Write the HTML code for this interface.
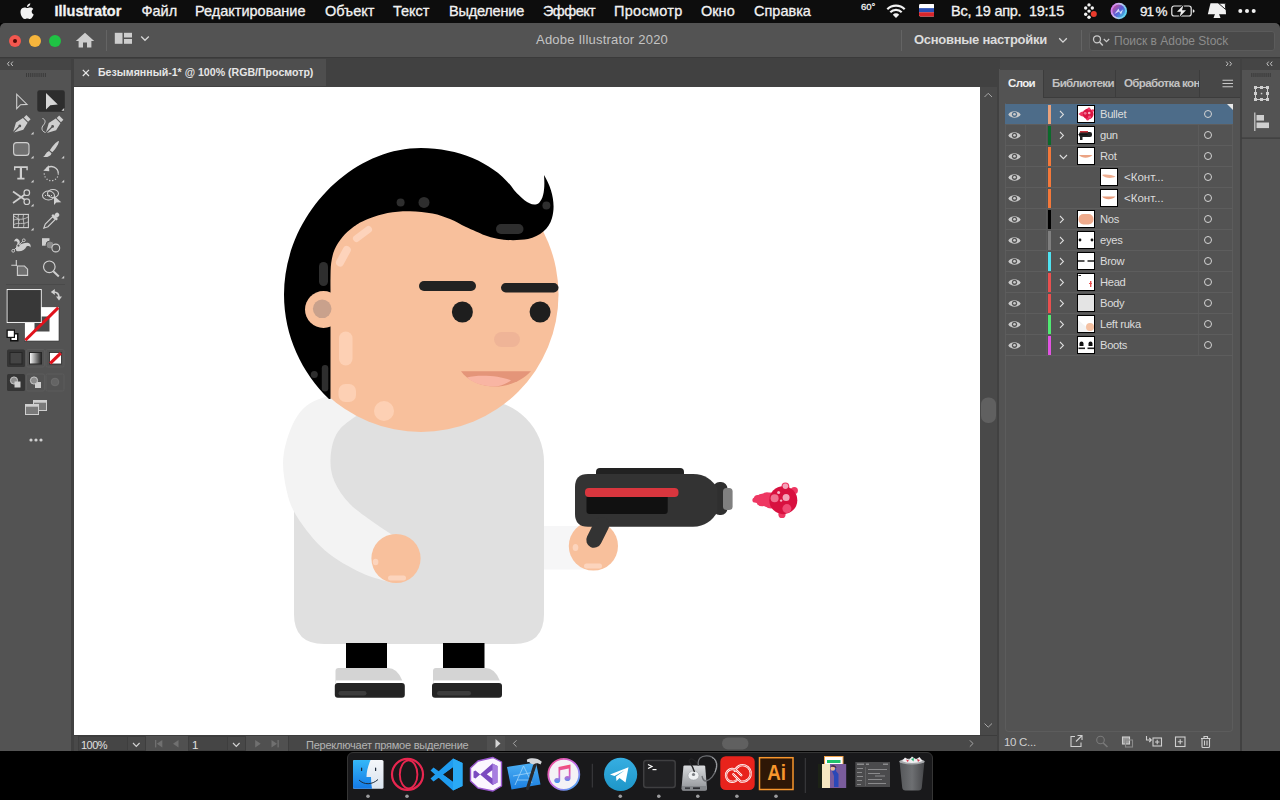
<!DOCTYPE html>
<html lang="ru"><head><meta charset="utf-8"><title>Adobe Illustrator 2020</title>
<style>
*{box-sizing:border-box;margin:0;padding:0}
html,body{width:1280px;height:800px;overflow:hidden;background:#000;font-family:"Liberation Sans",sans-serif;color:#ddd}
.a{position:absolute}
#menubar{left:0;top:0;width:1280px;height:23px;background:#0d0d0d}
#menubar span{-webkit-text-stroke:0.3px #f2f2f2;position:absolute;top:3px;font-size:14.5px;color:#f2f2f2;white-space:nowrap;line-height:17px}
#appbar{left:0;top:23px;width:1280px;height:35px;background:#535353;border-radius:5px 5px 0 0}
#win{left:0;top:58px;width:1280px;height:693px;background:#414141}
#tools{left:0;top:69px;width:71px;height:682px;background:#535353}
#canvas{left:74px;top:87px;width:906px;height:648px;background:#fff}
#tab{left:74px;top:58.5px;width:252px;height:27.5px;background:#4e4e4e;font-size:10.6px;font-weight:bold;line-height:27px;color:#e6e6e6;white-space:nowrap}
#vscroll{left:980px;top:87px;width:16.5px;height:648px;background:#494949}
#status{left:74px;top:735px;width:923px;height:16px;background:#494949}
#rpanel{left:998.5px;top:69px;width:241px;height:682px;background:#535353}
#rdock{left:1241.5px;top:69px;width:38.5px;height:682px;background:#535353}

.lr{left:0;width:228px;height:21px;border-bottom:1px solid #5d5d5d}
.ln{top:3px;font-size:11.2px;letter-spacing:-0.3px;line-height:15px;color:#dcdcdc;white-space:nowrap}
.pt{top:76px;font-size:11.5px;letter-spacing:-0.62px;font-weight:bold;line-height:15px;color:#c2c2c2;white-space:nowrap}
.st{top:2.5px;font-size:11.5px;line-height:14px;white-space:nowrap}
</style></head><body>
<div id="menubar" class="a">
<svg class="a" style="left:20px;top:3px" width="15" height="17" viewBox="0 0 15 17"><path d="M10.3 0.2 C10.4 1.2 10 2.1 9.4 2.8 C8.8 3.5 7.9 4 7 3.9 C6.9 3 7.3 2.1 7.9 1.5 C8.5 0.8 9.5 0.3 10.3 0.2 Z M13.3 5.9 C12.3 6.5 11.7 7.4 11.7 8.6 C11.7 10 12.5 11 13.7 11.5 C13.4 12.4 13 13.2 12.4 14 C11.7 15 11 16 9.9 16 C8.8 16 8.5 15.4 7.3 15.4 C6.1 15.4 5.7 16 4.7 16 C3.6 16 2.8 15 2.1 14 C0.7 12 -0.2 8.6 1.2 6.3 C1.9 5.1 3.2 4.4 4.5 4.4 C5.6 4.4 6.6 5.1 7.3 5.1 C7.9 5.1 9.2 4.3 10.5 4.4 C11 4.4 12.5 4.6 13.3 5.9 Z" fill="#f2f2f2"/></svg>
<span id="m0" style="left:54.5px;font-weight:bold">Illustrator</span>
<span id="m1" style="left:141.5px">Файл</span>
<span id="m2" style="left:195px">Редактирование</span>
<span id="m3" style="left:325px">Объект</span>
<span id="m4" style="left:393px">Текст</span>
<span id="m5" style="left:449px;letter-spacing:-0.2px">Выделение</span>
<span id="m6" style="left:543px;letter-spacing:-0.55px">Эффект</span>
<span id="m7" style="left:614px;letter-spacing:0.3px">Просмотр</span>
<span id="m8" style="left:701px">Окно</span>
<span id="m9" style="left:754px">Справка</span>
<span id="m10" style="left:861px;top:0;font-size:9.5px;line-height:14px">60°</span>
<span id="m11" style="left:951px;letter-spacing:-0.25px">Вс, 19 апр.&nbsp; 19:15</span>
<span id="m12" style="left:1140px;font-size:13.5px;letter-spacing:-1.1px">91 %</span>
<!-- wifi -->
<svg class="a" style="left:886px;top:3px" width="20" height="16" viewBox="0 0 20 16"><g fill="none" stroke="#f2f2f2" stroke-width="2.2" stroke-linecap="butt"><path d="M1.3 6.2 A12.3 12.3 0 0 1 18.7 6.2"/><path d="M4.3 9.3 A8 8 0 0 1 15.7 9.3"/></g><path d="M10 15 L6.8 11.7 A4.5 4.5 0 0 1 13.2 11.7 Z" fill="#f2f2f2"/></svg>
<!-- flag -->
<svg class="a" style="left:918.5px;top:4.3px" width="15.7" height="12.5" viewBox="0 0 17 13" preserveAspectRatio="none"><rect width="17" height="13" rx="1.5" fill="#fff"/><rect y="4.3" width="17" height="4.4" fill="#2a4fb5"/><path d="M0 8.7 H17 V11.5 Q17 13 15.5 13 H1.5 Q0 13 0 11.5 Z" fill="#d8262c"/></svg>
<!-- dots icon -->
<svg class="a" style="left:1082px;top:2px" width="18" height="19" viewBox="1082 2 18 19"><g fill="#f2f2f2"><circle cx="1089" cy="4.9" r="1.7"/><circle cx="1085.7" cy="8" r="1.7"/><circle cx="1092.3" cy="8" r="1.7"/><circle cx="1089" cy="11.1" r="1.7"/><circle cx="1085.7" cy="14.2" r="1.7"/><circle cx="1089" cy="17.3" r="1.7"/></g><circle cx="1093.8" cy="14" r="3" fill="#ea3b2c"/></svg>
<!-- siri -->
<svg class="a" style="left:1110px;top:2px" width="18" height="18" viewBox="0 0 18 18"><defs><linearGradient id="sg" x1="0" y1="0.3" x2="1" y2="0.7"><stop offset="0" stop-color="#d66af0"/><stop offset="0.450" stop-color="#c8c8f0"/><stop offset="1" stop-color="#45d2f0"/></linearGradient><linearGradient id="sg2" x1="0" y1="0" x2="1" y2="1"><stop offset="0" stop-color="#e0508a"/><stop offset="0.5" stop-color="#5a5ad8"/><stop offset="1" stop-color="#3ad0e0"/></linearGradient></defs><circle cx="8.8" cy="9" r="8.3" fill="url(#sg)"/><circle cx="8.8" cy="9" r="6.4" fill="url(#sg2)"/><path d="M4.5 12 L8.5 6.5 L10 10 L13 7.5 L11 12.5 L9 9.5 Z" fill="#eef" opacity="0.850"/></svg>
<!-- battery -->
<svg class="a" style="left:1170px;top:4px" width="27" height="14" viewBox="1170 4 27 14"><rect x="1171.8" y="6" width="19.4" height="10" rx="2.2" fill="none" stroke="#ececec" stroke-width="1.2"/><path d="M1192.8 9.2 Q1194.6 9.6 1194.6 11 Q1194.6 12.4 1192.8 12.8 Z" fill="#ececec"/><path d="M1183.5 5 L1177 11.8 H1181 L1179.5 17 L1186 10.2 H1182 Z" fill="#ececec" stroke="#0d0d0d" stroke-width="1.6" paint-order="stroke"/></svg>
<!-- display -->
<svg class="a" style="left:1206px;top:2px" width="22" height="18" viewBox="1206 2 22 18"><path d="M1210.5 3.3 H1225.3 L1226 14.3 H1207.8 Z" fill="#f2f2f2"/><path d="M1213.5 18 H1220.5 L1219 14 H1215 Z" fill="#f2f2f2"/><path d="M1218.5 3.3 H1225.3 L1225.7 9.5 Z" fill="#f2f2f2" stroke="#0d0d0d" stroke-width="0.9"/></svg>
<svg class="a" style="left:1237px;top:8px" width="20" height="6" viewBox="0 0 20 6"><circle cx="3.3" cy="3" r="2" fill="#f2f2f2"/><circle cx="10" cy="3" r="2" fill="#f2f2f2"/><circle cx="16.7" cy="3" r="2" fill="#f2f2f2"/></svg>
</div>
<div id="appbar" class="a">
<div class="a" style="left:8.8px;top:11.8px;width:12px;height:12px;border-radius:6px;background:#f3574f"></div>
<div class="a" style="left:12.8px;top:15.8px;width:4px;height:4px;border-radius:2px;background:#4d0a06"></div>
<div class="a" style="left:29px;top:11.8px;width:12px;height:12px;border-radius:6px;background:#f6b53c"></div>
<div class="a" style="left:48.8px;top:11.8px;width:12px;height:12px;border-radius:6px;background:#1fc244"></div>
<svg class="a" style="left:75px;top:9px" width="20" height="16" viewBox="0 0 20 16"><path d="M10 0.7 L0.8 9 H3.6 V15.4 H8 V10.6 H12 V15.4 H16.4 V9 H19.2 Z" fill="#cdcdcd"/></svg>
<div class="a" style="left:105.5px;top:7px;width:1px;height:21px;background:#646464"></div>
<svg class="a" style="left:114px;top:9px" width="20" height="13" viewBox="0 0 20 13"><rect x="0.8" y="0.8" width="7.7" height="11" fill="#cdcdcd"/><rect x="10" y="0.8" width="8" height="4.7" fill="#cdcdcd"/><rect x="10" y="7" width="8" height="4.8" fill="#cdcdcd"/></svg>
<svg class="a" style="left:140px;top:12px" width="10" height="7" viewBox="0 0 10 7"><path d="M1.2 1.5 L5 5.3 L8.8 1.5" fill="none" stroke="#d6d6d6" stroke-width="1.3"/></svg>
<span id="t0" class="a" style="left:536px;top:9px;font-size:13px;line-height:16px;color:#c4c4c4;white-space:nowrap;letter-spacing:0.22px">Adobe Illustrator 2020</span>
<div class="a" style="left:901px;top:7px;width:1px;height:21px;background:#646464"></div>
<span id="t1" class="a" style="left:914px;top:8px;font-size:13px;font-weight:bold;line-height:17px;color:#dcdcdc;white-space:nowrap;letter-spacing:-0.28px">Основные настройки</span>
<svg class="a" style="left:1058px;top:14px" width="10" height="7" viewBox="0 0 10 7"><path d="M1.2 1.3 L5 5.1 L8.8 1.3" fill="none" stroke="#d6d6d6" stroke-width="1.3"/></svg>
<div class="a" style="left:1081px;top:7px;width:1px;height:21px;background:#646464"></div>
<div class="a" style="left:1088.5px;top:8px;width:186px;height:19.5px;border-radius:3px;background:#494949;border:1px solid #5b5b5b"></div>
<svg class="a" style="left:1092px;top:11px" width="20" height="14" viewBox="0 0 20 14"><circle cx="5" cy="5.3" r="3.5" fill="none" stroke="#c9c9c9" stroke-width="1.3"/><path d="M7.6 8 L10.8 11.6" stroke="#c9c9c9" stroke-width="1.5"/><path d="M11.8 5 L14.5 7.7 L17.2 5" fill="none" stroke="#c9c9c9" stroke-width="1.2"/></svg>
<span id="t2" class="a" style="left:1114px;top:9.5px;font-size:12px;line-height:16px;color:#8c8c8c;white-space:nowrap">Поиск в Adobe Stock</span>
</div>
<div class="a" style="left:0;top:57px;width:1280px;height:1.5px;background:#3a3a3a"></div>
<div id="win" class="a"></div>
<div id="tools" class="a">
<svg width="71" height="682" viewBox="0 69 71 682" class="a" style="left:0;top:0">
<!-- gripper -->
<g fill="#3b3b3b"><rect x="26" y="73" width="1" height="4"/><rect x="28.1" y="73" width="1" height="4"/><rect x="30.2" y="73" width="1" height="4"/><rect x="32.3" y="73" width="1" height="4"/><rect x="34.4" y="73" width="1" height="4"/><rect x="36.5" y="73" width="1" height="4"/><rect x="38.6" y="73" width="1" height="4"/><rect x="40.7" y="73" width="1" height="4"/><rect x="42.8" y="73" width="1" height="4"/><rect x="44.9" y="73" width="1" height="4"/></g>
<!-- selection -->
<path d="M16.7 94.2 V108.6 L20.6 104.7 L27 104.4 Z" fill="none" stroke="#cfcfcf" stroke-width="1.1" stroke-linejoin="miter"/>
<!-- direct selection -->
<rect x="37.3" y="90.3" width="27.5" height="21.4" rx="2.2" fill="#2d2d2d"/>
<path d="M46 93 V109.6 L50.3 105.3 L57.8 104.5 Z" fill="#d6d6d6"/>
<path d="M64.2 108 V110.8 H61.4 Z" fill="#cfcfcf"/>
<!-- pen -->
<g transform="translate(20.7 125) rotate(45)" fill="#cfcfcf"><path d="M-3 -11 H3 V-7.5 H-3 Z"/><path d="M-3.3 -6.5 H3.3 L5.2 1.5 L0.6 10 V2.5 A1.4 1.4 0 1 0 -0.6 2.5 V10 L-5.2 1.5 Z"/></g>
<path d="M33.6 131.8 V134.6 H30.8 Z" fill="#cfcfcf"/>
<!-- curvature -->
<g transform="translate(53.5 125.5) rotate(45)" fill="#cfcfcf"><path d="M-3 -11 H3 V-7.5 H-3 Z"/><path d="M-3.3 -6.5 H3.3 L5.2 1.5 L0.6 10 V2.5 A1.4 1.4 0 1 0 -0.6 2.5 V10 L-5.2 1.5 Z"/></g>
<path d="M42.5 118.5 C46 119.5 45.5 123 43.5 125 C41 127.5 41.5 131.5 45.5 132.5" fill="none" stroke="#cfcfcf" stroke-width="1"/>
<!-- rectangle -->
<rect x="13.6" y="142.6" width="15.4" height="12.8" rx="3" fill="#707070" stroke="#cfcfcf" stroke-width="1.1"/>
<path d="M33.6 155.8 V158.6 H30.8 Z" fill="#cfcfcf"/>
<!-- brush -->
<path d="M58.8 141 C59.5 142.5 56 148.5 52.3 152.3 L49.8 150.2 C52.5 146 57.5 140.5 58.8 141 Z" fill="#cfcfcf"/>
<path d="M49 151 L51.5 153.2 C51 156 47.5 157.5 43.2 157 C45.5 155.5 45.5 152.5 49 151 Z" fill="#cfcfcf"/>
<path d="M64.2 155.8 V158.6 H61.4 Z" fill="#cfcfcf"/>
<!-- type -->
<path d="M14 166.2 H27.8 V170.2 H26.4 V168 H22 V177.8 H24.5 V179.6 H17.3 V177.8 H19.8 V168 H15.4 V170.2 H14 Z" fill="#cfcfcf"/>
<path d="M33.6 179.8 V182.6 H30.8 Z" fill="#cfcfcf"/>
<!-- rotate -->
<path d="M46.5 168.5 A7 7 0 0 1 58.3 173.5" fill="none" stroke="#cfcfcf" stroke-width="1.3"/>
<path d="M58.3 173.5 A7 7 0 1 1 44.5 172" fill="none" stroke="#cfcfcf" stroke-width="1.2" stroke-dasharray="1.2 1.8"/>
<path d="M43.3 170.8 L48.8 165.3 L49.3 171.3 Z" fill="#cfcfcf"/>
<path d="M64.2 179.8 V182.6 H61.4 Z" fill="#cfcfcf"/>
<!-- scissors -->
<g fill="none" stroke="#cfcfcf" stroke-width="1.2"><circle cx="26.8" cy="192.7" r="2.8"/><circle cx="26.8" cy="201.7" r="2.8"/></g>
<path d="M13 191.5 L24.5 199.5 M13 203 L24.5 194.8" stroke="#cfcfcf" stroke-width="1.7" fill="none"/>
<path d="M33.6 203.8 V206.6 H30.8 Z" fill="#cfcfcf"/>
<!-- shape builder -->
<ellipse cx="48.5" cy="195.5" rx="6" ry="4.5" fill="none" stroke="#cfcfcf" stroke-width="1.1"/>
<ellipse cx="53" cy="193.5" rx="5.5" ry="4" fill="none" stroke="#cfcfcf" stroke-width="1.1"/>
<path d="M45 195.5 H53" stroke="#cfcfcf" stroke-width="1.1" stroke-dasharray="1 1"/>
<path d="M54 195.8 V205 L56.3 202.6 L61.3 202.3 Z" fill="#cfcfcf"/>
<!-- mesh -->
<rect x="13.6" y="214.4" width="14.8" height="13.2" fill="none" stroke="#cfcfcf" stroke-width="1.1"/>
<path d="M14 220 C18 218 22 221 28 217 M14 224.5 C18 222 23 225 28 222 M18.5 214.5 C17 219 20 223 18 227.5 M23.5 214.5 C22 219 25 223 23.5 227.5 M14 216 L20 220.5" fill="none" stroke="#cfcfcf" stroke-width="0.8"/>
<path d="M33.6 227.8 V230.6 H30.8 Z" fill="#cfcfcf"/>
<!-- eyedropper -->
<g transform="translate(50.5 221.5) rotate(45)"><rect x="-2.2" y="-11.5" width="4.4" height="5" rx="2" fill="#cfcfcf"/><rect x="-3.5" y="-7" width="7" height="2.2" fill="#cfcfcf"/><path d="M-1.9 -4.8 H1.9 V5.5 L0 9.5 L-1.9 5.5 Z" fill="none" stroke="#cfcfcf" stroke-width="1.1"/></g>
<!-- puppet warp -->
<path d="M17 238.5 C20.5 240 20.5 243 18.5 245.5 C22 243.5 25.5 242.5 28.5 243 C30.5 243.5 31 245.5 30.5 247.5 C29.5 246 28 245.8 26.5 246.5 C25 250 21 252 16.5 251 C15 248 17 245 17.5 243 C17.8 241.5 15.8 240.8 14 241.5 C14.5 239.5 15.8 238.5 17 238.5 Z" fill="#cfcfcf"/>
<path d="M13.2 250.8 L23.8 240.3" stroke="#cfcfcf" stroke-width="0.9"/>
<circle cx="13.2" cy="250.8" r="1.4" fill="#535353" stroke="#cfcfcf" stroke-width="0.9"/><circle cx="18.5" cy="245.6" r="1.5" fill="#535353" stroke="#cfcfcf" stroke-width="0.9"/><circle cx="23.8" cy="240.3" r="1.4" fill="#535353" stroke="#cfcfcf" stroke-width="0.9"/>
<!-- blend -->
<rect x="42" y="238.2" width="7.5" height="7.5" fill="#cfcfcf"/>
<circle cx="50" cy="245" r="4" fill="#8a8a8a" stroke="#535353" stroke-width="1"/>
<circle cx="55.8" cy="248" r="3.9" fill="#535353" stroke="#cfcfcf" stroke-width="1.1"/>
<!-- artboard -->
<path d="M16.3 260 V266 M11.3 265.2 H17" stroke="#cfcfcf" stroke-width="1.1" fill="none"/>
<path d="M17.4 266 H24.5 L27.6 269.2 V275.4 H17.4 Z" fill="#707070" stroke="#cfcfcf" stroke-width="1.1"/>
<!-- zoom -->
<circle cx="49.3" cy="266.8" r="5.8" fill="none" stroke="#cfcfcf" stroke-width="1.2"/>
<path d="M53.3 271.3 L58.8 276.5" stroke="#cfcfcf" stroke-width="2"/>
<path d="M64.2 275.8 V278.6 H61.4 Z" fill="#cfcfcf"/>
<!-- divider -->
<rect x="6" y="284" width="59" height="1" fill="#4a4a4a"/>
<!-- stroke swatch -->
<rect x="24.5" y="306.8" width="34.5" height="34.2" fill="#fff" stroke="#333" stroke-width="0.6"/>
<rect x="34.5" y="316.5" width="15" height="15" fill="#4a4a4a"/>
<path d="M25.3 340.2 L58.3 307.6" stroke="#e0121c" stroke-width="3"/>
<!-- fill swatch -->
<rect x="6.7" y="289" width="35" height="34" fill="#fff"/>
<rect x="7.9" y="290.2" width="32.6" height="31.6" fill="#383838" stroke="#1f1f1f" stroke-width="0.6"/>
<!-- swap arrow -->
<path d="M53.5 292 C57.5 292 59 294.5 59 297.5" fill="none" stroke="#cfcfcf" stroke-width="1.6"/>
<path d="M50.8 292 L54.8 289 V295 Z M59 300.5 L56 296.5 H62 Z" fill="#cfcfcf"/>
<!-- default -->
<rect x="10" y="333" width="8.5" height="8.5" fill="#111"/><rect x="11.5" y="334.5" width="5.5" height="5.5" fill="#fff"/>
<rect x="6.5" y="329.5" width="8.5" height="8.5" fill="#111"/><rect x="7.8" y="330.8" width="6" height="6" fill="#fff"/>
<!-- color buttons -->
<rect x="7" y="349.5" width="18" height="17.5" rx="1.5" fill="#353535"/>
<rect x="10" y="352.5" width="12" height="11.5" fill="#454545" stroke="#262626" stroke-width="1"/>
<rect x="26.5" y="349.5" width="18" height="17.5" rx="1.5" fill="none" stroke="#5e5e5e" stroke-width="0.7"/>
<defs><linearGradient id="gr"><stop offset="0" stop-color="#fff"/><stop offset="1" stop-color="#222"/></linearGradient></defs>
<rect x="29.5" y="352.5" width="12" height="11.5" fill="url(#gr)" stroke="#262626" stroke-width="1"/>
<rect x="46" y="349.5" width="18" height="17.5" rx="1.5" fill="none" stroke="#5e5e5e" stroke-width="0.7"/>
<rect x="49.5" y="352.5" width="12" height="11.5" fill="#fff" stroke="#262626" stroke-width="0.8"/>
<path d="M50.2 363.3 L60.8 353.2" stroke="#e0121c" stroke-width="3.2"/>
<!-- draw modes -->
<rect x="7" y="374" width="18" height="17" rx="1.5" fill="#353535"/>
<circle cx="14" cy="380.5" r="3.6" fill="#8c8c8c" stroke="#cfcfcf" stroke-width="0.9"/><rect x="14.5" y="381.5" width="6" height="6" fill="#cfcfcf"/>
<rect x="26.5" y="374" width="18" height="17" rx="1.5" fill="none" stroke="#5e5e5e" stroke-width="0.7"/>
<rect x="35" y="382" width="6" height="6" fill="#cfcfcf"/><circle cx="34" cy="380.5" r="3.6" fill="#8c8c8c" stroke="#cfcfcf" stroke-width="0.9"/>
<rect x="46" y="374" width="18" height="17" rx="1.5" fill="none" stroke="#5e5e5e" stroke-width="0.7"/>
<circle cx="55" cy="382" r="3.8" fill="#646464" stroke="#6e6e6e" stroke-width="0.9"/>
<!-- screen mode -->
<rect x="33.5" y="400.5" width="13" height="10" fill="#7a7a7a" stroke="#cfcfcf" stroke-width="1"/><rect x="33.5" y="400.5" width="13" height="2.2" fill="#cfcfcf"/>
<rect x="25.5" y="404.5" width="13" height="10" fill="#7a7a7a" stroke="#cfcfcf" stroke-width="1"/><rect x="25.5" y="404.5" width="13" height="2.2" fill="#cfcfcf"/>
<!-- more -->
<circle cx="31" cy="440" r="1.6" fill="#cfcfcf"/><circle cx="36" cy="440" r="1.6" fill="#cfcfcf"/><circle cx="41" cy="440" r="1.6" fill="#cfcfcf"/>
</svg>
</div>
<div class="a" style="left:0;top:58.5px;width:71px;height:11px;background:#454545"></div>
<svg class="a" style="left:6px;top:60px" width="9" height="8" viewBox="0 0 9 8"><path d="M3.3 1.6 L1.5 3.8 L3.3 6 M6.8 1.6 L5 3.8 L6.8 6" fill="none" stroke="#c4c4c4" stroke-width="1"/></svg>
<div id="tab" class="a"><svg class="a" style="left:7.5px;top:10px" width="8" height="8" viewBox="0 0 8 8"><path d="M0.8 0.8 L7 7 M7 0.8 L0.8 7" stroke="#e6e6e6" stroke-width="1.2"/></svg><span id="tabt" class="a" style="left:24px;top:0">Безымянный-1* @ 100% (RGB/Просмотр)</span></div>
<div id="canvas" class="a"></div>
<svg class="a" id="art" style="left:74px;top:87px" width="906" height="648" viewBox="74 87 906 648">
<!-- body -->
<path d="M294 462 A62 62 0 0 1 356 400 L482 400 A62 62 0 0 1 544 462 L544 614 Q544 644 514 644 L324 644 Q294 644 294 614 Z" fill="#e0e0e0"/>
<!-- back arm -->
<path d="M365.0 392.0 C357.8 393.0 333.2 394.1 322.0 398.0 C310.8 401.9 303.9 406.4 297.5 415.7 C291.1 425.0 285.5 441.6 283.7 454.0 C281.9 466.4 284.2 479.4 286.5 490.0 C288.8 500.6 291.1 507.4 297.5 517.5 C303.9 527.6 314.5 541.3 325.0 550.5 C335.5 559.7 349.5 567.1 360.7 572.5 C371.9 577.9 386.8 581.2 392.0 583.0 L396.0 536.0 C395.2 535.7 394.6 536.2 391.0 534.0 C387.4 531.8 381.4 528.0 374.5 523.0 C367.6 518.0 356.3 510.6 349.7 503.7 C343.1 496.8 337.8 489.0 334.6 481.7 C331.4 474.4 330.3 467.5 330.5 459.7 C330.7 451.9 332.3 441.9 336.0 435.0 C339.7 428.1 345.2 423.7 352.5 418.5 C359.8 413.3 375.4 406.4 380.0 404.0 Z" fill="#f3f3f3"/>
<!-- front arm -->
<rect x="544" y="526" width="56" height="43.5" fill="#f6f6f7"/>
<!-- legs -->
<rect x="346" y="643" width="41" height="25" fill="#000"/>
<rect x="443" y="643" width="41.5" height="25" fill="#000"/>
<!-- shoes -->
<path d="M335.5 683 L335.5 671 Q335.5 668 338.5 668 L388 668 Q397 668 402 680 L403 683 Z" fill="#d4d4d4"/>
<rect x="336" y="680.5" width="67" height="3" fill="#fff"/>
<rect x="334.8" y="683" width="70" height="14.8" rx="3" fill="#232323"/>
<rect x="338.5" y="691" width="28" height="4.6" rx="2.3" fill="#3c3c3c"/>
<path d="M433 683 L433 671 Q433 668 436 668 L485.5 668 Q494.5 668 499.5 680 L500.5 683 Z" fill="#d4d4d4"/>
<rect x="433.5" y="680.5" width="67" height="3" fill="#fff"/>
<rect x="432" y="683" width="70" height="14.8" rx="3" fill="#232323"/>
<rect x="437" y="691" width="34" height="4.6" rx="2.3" fill="#3c3c3c"/>
<!-- head -->
<clipPath id="fc"><rect x="329" y="150" width="240" height="300"/></clipPath><circle cx="421" cy="294.5" r="137.5" fill="#f8c09c" clip-path="url(#fc)"/>
<!-- hair -->
<path d="M329 399 L330.5 399 L330.5 290 C330.5 288.0 330.4 282.5 330.5 278.0 C330.6 273.5 330.5 267.8 331.2 263.0 C331.9 258.2 332.7 253.8 334.6 249.5 C336.5 245.2 339.4 240.7 342.5 237.0 C345.6 233.3 349.2 230.1 353.0 227.3 C356.8 224.5 359.2 222.6 365.0 220.2 C370.8 217.8 380.0 214.5 387.5 213.0 C395.0 211.5 402.5 211.1 410.0 211.2 C417.5 211.3 425.8 212.2 432.5 213.5 C439.2 214.8 444.4 216.8 450.0 219.0 C455.6 221.2 460.3 224.3 466.0 227.0 C471.7 229.7 481.0 233.7 484.0 235.0 C500 241 515 241 528 239 C540 236 549 229 552 218 C556 204 552 188 544 175 C545 188 544 198 539 203 C532 208 523 200 514 190 C497 165 461 148 421 148 C349.2 148 284 217.7 284 294.5 C284 336 302 373 329 399 Z" fill="#000"/>
<!-- ear -->
<circle cx="323.5" cy="309.5" r="18.5" fill="#f8c09c"/>
<circle cx="322.2" cy="308.8" r="9.3" fill="#c9a18c"/>
<!-- hair marks -->
<circle cx="400.6" cy="202.4" r="4" fill="#2e2e2e"/>
<circle cx="424" cy="202.4" r="5.5" fill="#2e2e2e"/>
<rect x="319" y="262" width="9" height="24" rx="4.5" fill="#2e2e2e"/>
<rect x="496" y="224" width="27.5" height="10" rx="5" fill="#2e2e2e"/>
<circle cx="546.4" cy="205.6" r="4" fill="#2e2e2e"/>
<rect x="321.8" y="365" width="6.5" height="26.5" rx="3.2" fill="#2e2e2e"/>
<circle cx="314.3" cy="374.5" r="3.5" fill="#2e2e2e"/>
<!-- face highlights -->
<path d="M356.5 238.5 L368.5 229.5" stroke="#fdd3bb" stroke-width="7" stroke-linecap="round"/>
<path d="M340 262.5 L346.8 250" stroke="#fdd3bb" stroke-width="8" stroke-linecap="round"/>
<rect x="339" y="331.5" width="13.5" height="34" rx="6.7" fill="#fdd0b4"/>
<rect x="338.5" y="384" width="17.5" height="18" rx="7" fill="#fdd0b4"/>
<circle cx="384" cy="411" r="10" fill="#fdd0b4"/>
<!-- brows -->
<rect x="419" y="281" width="57" height="10" rx="5" fill="#222"/>
<rect x="501" y="283" width="57.5" height="9.5" rx="4.7" fill="#222"/>
<!-- eyes -->
<circle cx="462.4" cy="312" r="10.5" fill="#1e1e1e"/>
<circle cx="540.1" cy="312" r="10.5" fill="#1e1e1e"/>
<!-- nose -->
<rect x="494" y="332" width="26" height="15" rx="7.5" fill="#efb497"/>
<!-- mouth -->
<path d="M461 371.3 L531 371.3 C522 381 508 386.5 495 386.5 C481 386.5 468 381 461 371.3 Z" fill="#e49579"/>
<path d="M467 377.5 C478 374.5 500 375.5 511 380.5 C505 384.5 499 386.5 494 386.5 C483 386.5 473 383 467 377.5 Z" fill="#f9b5a3"/>
<!-- back hand -->
<circle cx="396" cy="558.5" r="24.6" fill="#f8c09c"/>
<ellipse cx="375.6" cy="562" rx="2.8" ry="3.2" fill="#fcd4bd"/>
<rect x="388" y="575.5" width="18" height="5" rx="2.5" fill="#fcd4bd"/>
<!-- front hand -->
<circle cx="593.4" cy="546" r="24.6" fill="#f8c09c"/>
<ellipse cx="575.5" cy="547.5" rx="2.8" ry="3.5" fill="#fcd4bd"/>
<rect x="584" y="563.5" width="18" height="5" rx="2.5" fill="#fcd4bd"/>
<!-- gun -->
<rect x="596" y="468" width="88" height="12" rx="4" fill="#222"/>
<rect x="713" y="482" width="14.5" height="33" rx="6.5" fill="#2f2f2f"/>
<path d="M588 474 L693 474 C705 474 712 480 717.5 488 L717.5 512 C712 520.5 705 526.7 693 526.7 L588 526.7 Q575 526.7 575 513.7 L575 487 Q575 474 588 474 Z" fill="#333"/>
<rect x="723" y="488" width="9.6" height="22" rx="3.5" fill="#808080"/>
<rect x="585" y="488" width="93.5" height="9" rx="4" fill="#d9363e"/>
<path d="M586.5 497 L667.7 497 L667.7 511 Q667.7 514 664.7 514 L589.5 514 Q586.5 514 586.5 511 Z" fill="#111"/>
<path d="M601.5 525 L594 540" stroke="#333" stroke-width="15.5" stroke-linecap="round"/>
<!-- bullet -->
<circle cx="755" cy="500" r="2.6" fill="#ee3762"/>
<circle cx="757.8" cy="499" r="4" fill="#ee3762"/>
<circle cx="762" cy="500" r="6.3" fill="#ee3762"/>
<circle cx="767" cy="499.5" r="7.3" fill="#ee3762"/>
<circle cx="771" cy="500.5" r="8" fill="#ee3762"/>
<circle cx="785.4" cy="486.3" r="3.9" fill="#ee3762"/>
<circle cx="794.3" cy="490.5" r="3.6" fill="#ee3762"/>
<circle cx="782" cy="514.4" r="3.6" fill="#ee3762"/>
<circle cx="783.3" cy="500.2" r="14" fill="#d8103f"/>
<circle cx="785.4" cy="486.3" r="2.7" fill="#f4a3b9"/>
<circle cx="774.6" cy="498.2" r="4" fill="#f0708f"/>
<circle cx="786.1" cy="497.4" r="3.5" fill="#f4a3b9"/>
<circle cx="786.9" cy="508.6" r="4.5" fill="#f04a74"/>
<circle cx="778.6" cy="492.4" r="1.5" fill="#f6b4c6"/>
<circle cx="781.1" cy="500.6" r="1.2" fill="#f6b4c6"/>
</svg>
<div id="vscroll" class="a">
<svg class="a" style="left:0;top:0" width="17" height="648" viewBox="980 87 17 648"><path d="M984.5 97 L988.2 93.3 L992 97" fill="none" stroke="#a8a8a8" stroke-width="1"/><path d="M984.5 723.5 L988.2 727.2 L992 723.5" fill="none" stroke="#a8a8a8" stroke-width="1"/><rect x="981" y="397.5" width="15" height="25.5" rx="7" fill="#606060"/></svg></div>
<div class="a" style="left:980px;top:735px;width:17px;height:16px;background:#454545"></div>
<div id="status" class="a">
<div class="a" style="left:0;top:0;width:923px;height:1px;background:#3c3c3c"></div>
<div class="a" style="left:4px;top:1px;width:50px;height:15px;background:#454545;border:1px solid #3e3e3e"></div>
<div class="a" style="left:54px;top:1px;width:18px;height:15px;background:#484848;border:1px solid #3e3e3e;border-left:none"></div>
<div class="a" style="left:72px;top:1px;width:42px;height:15px;background:#505050"></div>
<div class="a" style="left:114px;top:1px;width:40px;height:15px;background:#454545;border:1px solid #3e3e3e"></div>
<div class="a" style="left:154px;top:1px;width:18px;height:15px;background:#484848;border:1px solid #3e3e3e;border-left:none"></div>
<div class="a" style="left:172px;top:1px;width:42px;height:15px;background:#505050"></div>
<div class="a" style="left:214px;top:1px;width:199px;height:15px;background:#474747;border-left:1px solid #3e3e3e"></div>
<div class="a" style="left:413px;top:1px;width:18px;height:15px;background:#505050"></div>
<span id="s0" class="a st" style="left:7px;font-size:11px;letter-spacing:-0.5px;color:#e0e0e0">100%</span>
<span id="s1" class="a st" style="left:118px;color:#e0e0e0">1</span>
<span id="s2" class="a st" style="left:232px;font-size:11px;letter-spacing:-0.23px;color:#b4b4b4">Переключает прямое выделение</span>
<svg class="a" style="left:0;top:0" width="923" height="16" viewBox="74 735 923 16"><g fill="none" stroke="#d2d2d2" stroke-width="1.2"><path d="M133 743 L136.3 746.3 L139.6 743"/><path d="M233 743 L236.3 746.3 L239.6 743"/></g>
<g fill="#707070"><rect x="155" y="740" width="1.3" height="7.4"/><path d="M162.3 740 V747.4 L156.8 743.7 Z"/><path d="M178.5 740 V747.4 L173 743.7 Z"/><path d="M255.2 740 V747.4 L260.7 743.7 Z"/><path d="M271.5 740 V747.4 L277 743.7 Z"/><rect x="277.5" y="740" width="1.3" height="7.4"/></g>
<path d="M495.5 739 V748 L500.5 743.5 Z" fill="#d6d6d6"/>
<path d="M516.5 740.3 L513.3 743.5 L516.5 746.7" fill="none" stroke="#a8a8a8" stroke-width="1"/>
<path d="M969.8 740.3 L973 743.5 L969.8 746.7" fill="none" stroke="#a8a8a8" stroke-width="1"/>
<rect x="722" y="737.5" width="26.5" height="12" rx="6" fill="#606060"/>
</g></svg>
</div>
<div id="rpanel" class="a"></div>
<div class="a" style="left:1000px;top:58.5px;width:239.5px;height:11px;background:#454545"></div>
<svg class="a" style="left:1224px;top:60px" width="9" height="8" viewBox="0 0 9 8"><path d="M2.2 1.6 L4 3.8 L2.2 6 M5.7 1.6 L7.5 3.8 L5.7 6" fill="none" stroke="#c4c4c4" stroke-width="1"/></svg>
<div class="a" style="left:1000px;top:69.5px;width:239.5px;height:27px;background:#474747"></div>
<div class="a" style="left:1000px;top:69.5px;width:42.5px;height:27.5px;background:#535353"></div>
<div class="a" style="left:1042.5px;top:69.5px;width:1px;height:27px;background:#3c3c3c"></div>
<div class="a" style="left:1115px;top:69.5px;width:1px;height:27px;background:#3c3c3c"></div>
<div class="a" style="left:1199px;top:69.5px;width:1px;height:27px;background:#3c3c3c"></div>
<div class="a" style="left:1042.5px;top:96.5px;width:197px;height:1px;background:#3c3c3c"></div>
<span id="p0" class="a pt" style="left:1008px;color:#f0f0f0">Слои</span>
<span id="p1" class="a pt" style="left:1052px">Библиотеки</span>
<span id="p2" class="a pt" style="left:1124px;width:75px;overflow:hidden">Обработка контура</span>
<svg class="a" style="left:1222px;top:79px" width="12" height="9" viewBox="0 0 12 9"><path d="M0.5 1.2 H11 M0.5 4.5 H11 M0.5 7.8 H11" stroke="#c9c9c9" stroke-width="1.1"/></svg>
<div class="a" style="left:1004.5px;top:103px;width:228.5px;height:628.5px;border:1px solid #5c5c5c;border-radius:0 0 4px 4px;border-top:none"></div>
<div id="llist" class="a" style="left:1004.5px;top:0;width:228px;height:0">
<div class="a" style="left:20px;top:103.5px;width:1px;height:252px;background:#5b5b5b"></div>
<div class="a" style="left:41px;top:103.5px;width:1px;height:252px;background:#5b5b5b"></div>
<div class="a" style="left:193px;top:103.5px;width:1px;height:252px;background:#5b5b5b"></div>
<div class="lr a" style="top:103.5px;background:#4d6c89"><svg class="a" style="left:3.5px;top:6px" width="13" height="9" viewBox="0 0 13 9"><path d="M0.3 4.5 C2.5 0.3 10.5 0.3 12.7 4.5 C10.5 8.7 2.5 8.7 0.3 4.5 Z" fill="#c9c9c9"/><circle cx="6.5" cy="4.3" r="2.6" fill="#4d6c89"/><circle cx="6.5" cy="4.3" r="1.3" fill="#c9c9c9"/></svg><div class="a" style="left:43px;top:1px;width:3.5px;height:19px;background:#e9a27c"></div><svg class="a" style="left:54.3px;top:6.5px" width="7" height="10" viewBox="0 0 7 10"><path d="M1 1 L4.4 4.4 L1 7.8" fill="none" stroke="#dedede" stroke-width="1.1"/></svg><svg class="a" style="left:72px;top:1.5px" width="18" height="18" viewBox="0 0 18 18"><rect width="18" height="18" fill="#fff"/><path d="M1.5 9 L4 7 L8 6 L8 12 L4 11 Z" fill="#ee3762"/><circle cx="11.2" cy="9" r="5.4" fill="#db1442"/><circle cx="12" cy="4" r="1.4" fill="#ee3762"/><circle cx="15.8" cy="5.6" r="1.3" fill="#ee3762"/><circle cx="10.6" cy="14.3" r="1.3" fill="#ee3762"/><circle cx="12.2" cy="8" r="1.3" fill="#f6b0c2"/><circle cx="8.2" cy="8.3" r="1.4" fill="#f0708f"/><circle cx="12.5" cy="12" r="1.6" fill="#f04a74"/><rect x="0.5" y="0.5" width="17" height="17" fill="none" stroke="#000" stroke-width="1"/></svg><span id="L0" class="a ln" style="left:95.5px">Bullet</span><div class="a" style="left:199px;top:6.5px;width:8px;height:8px;border-radius:4px;border:1px solid #d4d4d4"></div><svg class="a" style="left:222px;top:0" width="6" height="6" viewBox="0 0 6 6"><path d="M0 0 H6 V6 Z" fill="#e8e8e8"/></svg></div><div class="lr a" style="top:124.5px;background:transparent"><svg class="a" style="left:3.5px;top:6px" width="13" height="9" viewBox="0 0 13 9"><path d="M0.3 4.5 C2.5 0.3 10.5 0.3 12.7 4.5 C10.5 8.7 2.5 8.7 0.3 4.5 Z" fill="#c9c9c9"/><circle cx="6.5" cy="4.3" r="2.6" fill="#535353"/><circle cx="6.5" cy="4.3" r="1.3" fill="#c9c9c9"/></svg><div class="a" style="left:43px;top:1px;width:3.5px;height:19px;background:#0b6a2b"></div><svg class="a" style="left:54.3px;top:6.5px" width="7" height="10" viewBox="0 0 7 10"><path d="M1 1 L4.4 4.4 L1 7.8" fill="none" stroke="#dedede" stroke-width="1.1"/></svg><svg class="a" style="left:72px;top:1.5px" width="18" height="18" viewBox="0 0 18 18"><rect width="18" height="18" fill="#fff"/><rect x="2" y="6" width="13" height="5" rx="2" fill="#222"/><rect x="3" y="5" width="8" height="1.5" fill="#c8323a"/><rect x="3" y="10" width="2.5" height="4" fill="#222"/><rect x="1.5" y="8" width="9" height="1.2" fill="#111"/><rect x="0.5" y="0.5" width="17" height="17" fill="none" stroke="#000" stroke-width="1"/></svg><span id="L1" class="a ln" style="left:95.5px">gun</span><div class="a" style="left:199px;top:6.5px;width:8px;height:8px;border-radius:4px;border:1px solid #d4d4d4"></div></div><div class="lr a" style="top:145.5px;background:transparent"><svg class="a" style="left:3.5px;top:6px" width="13" height="9" viewBox="0 0 13 9"><path d="M0.3 4.5 C2.5 0.3 10.5 0.3 12.7 4.5 C10.5 8.7 2.5 8.7 0.3 4.5 Z" fill="#c9c9c9"/><circle cx="6.5" cy="4.3" r="2.6" fill="#535353"/><circle cx="6.5" cy="4.3" r="1.3" fill="#c9c9c9"/></svg><div class="a" style="left:43px;top:1px;width:3.5px;height:19px;background:#f3783a"></div><svg class="a" style="left:54.5px;top:8px" width="10" height="7" viewBox="0 0 10 7"><path d="M0.8 1 L4.4 4.6 L8 1" fill="none" stroke="#dedede" stroke-width="1.1"/></svg><svg class="a" style="left:72px;top:1.5px" width="18" height="18" viewBox="0 0 18 18"><rect width="18" height="18" fill="#fff"/><path d="M2 8 H15.5 C12 11.5 5 11.5 2 8 Z" fill="#eba383"/><rect x="0.5" y="0.5" width="17" height="17" fill="none" stroke="#000" stroke-width="1"/></svg><span id="L2" class="a ln" style="left:95.5px">Rot</span><div class="a" style="left:199px;top:6.5px;width:8px;height:8px;border-radius:4px;border:1px solid #d4d4d4"></div></div><div class="lr a" style="top:166.5px;background:transparent"><svg class="a" style="left:3.5px;top:6px" width="13" height="9" viewBox="0 0 13 9"><path d="M0.3 4.5 C2.5 0.3 10.5 0.3 12.7 4.5 C10.5 8.7 2.5 8.7 0.3 4.5 Z" fill="#c9c9c9"/><circle cx="6.5" cy="4.3" r="2.6" fill="#535353"/><circle cx="6.5" cy="4.3" r="1.3" fill="#c9c9c9"/></svg><div class="a" style="left:43px;top:1px;width:3.5px;height:19px;background:#f3783a"></div><svg class="a" style="left:95px;top:1.5px" width="18" height="18" viewBox="0 0 18 18"><rect width="18" height="18" fill="#fff"/><path d="M2 7 C6 6 12 7 15.5 8.5 C11 11 5 10 2 7 Z" fill="#efae90"/><rect x="0.5" y="0.5" width="17" height="17" fill="none" stroke="#000" stroke-width="1"/></svg><span id="L3" class="a ln" style="left:119.5px;font-size:11.5px;letter-spacing:0">&lt;Конт...</span><div class="a" style="left:199px;top:6.5px;width:8px;height:8px;border-radius:4px;border:1px solid #d4d4d4"></div></div><div class="lr a" style="top:187.5px;background:transparent"><svg class="a" style="left:3.5px;top:6px" width="13" height="9" viewBox="0 0 13 9"><path d="M0.3 4.5 C2.5 0.3 10.5 0.3 12.7 4.5 C10.5 8.7 2.5 8.7 0.3 4.5 Z" fill="#c9c9c9"/><circle cx="6.5" cy="4.3" r="2.6" fill="#535353"/><circle cx="6.5" cy="4.3" r="1.3" fill="#c9c9c9"/></svg><div class="a" style="left:43px;top:1px;width:3.5px;height:19px;background:#f3783a"></div><svg class="a" style="left:95px;top:1.5px" width="18" height="18" viewBox="0 0 18 18"><rect width="18" height="18" fill="#fff"/><path d="M2 7.5 H15.5 C12 11 5 11 2 7.5 Z" fill="#e89b7b"/><rect x="0.5" y="0.5" width="17" height="17" fill="none" stroke="#000" stroke-width="1"/></svg><span id="L4" class="a ln" style="left:119.5px;font-size:11.5px;letter-spacing:0">&lt;Конт...</span><div class="a" style="left:199px;top:6.5px;width:8px;height:8px;border-radius:4px;border:1px solid #d4d4d4"></div></div><div class="lr a" style="top:208.5px;background:transparent"><svg class="a" style="left:3.5px;top:6px" width="13" height="9" viewBox="0 0 13 9"><path d="M0.3 4.5 C2.5 0.3 10.5 0.3 12.7 4.5 C10.5 8.7 2.5 8.7 0.3 4.5 Z" fill="#c9c9c9"/><circle cx="6.5" cy="4.3" r="2.6" fill="#535353"/><circle cx="6.5" cy="4.3" r="1.3" fill="#c9c9c9"/></svg><div class="a" style="left:43px;top:1px;width:3.5px;height:19px;background:#000000"></div><svg class="a" style="left:54.3px;top:6.5px" width="7" height="10" viewBox="0 0 7 10"><path d="M1 1 L4.4 4.4 L1 7.8" fill="none" stroke="#dedede" stroke-width="1.1"/></svg><svg class="a" style="left:72px;top:1.5px" width="18" height="18" viewBox="0 0 18 18"><rect width="18" height="18" fill="#fff"/><rect x="1.5" y="4" width="15" height="10.5" rx="5" fill="#efab8c"/><rect x="0.5" y="0.5" width="17" height="17" fill="none" stroke="#000" stroke-width="1"/></svg><span id="L5" class="a ln" style="left:95.5px">Nos</span><div class="a" style="left:199px;top:6.5px;width:8px;height:8px;border-radius:4px;border:1px solid #d4d4d4"></div></div><div class="lr a" style="top:229.5px;background:transparent"><svg class="a" style="left:3.5px;top:6px" width="13" height="9" viewBox="0 0 13 9"><path d="M0.3 4.5 C2.5 0.3 10.5 0.3 12.7 4.5 C10.5 8.7 2.5 8.7 0.3 4.5 Z" fill="#c9c9c9"/><circle cx="6.5" cy="4.3" r="2.6" fill="#535353"/><circle cx="6.5" cy="4.3" r="1.3" fill="#c9c9c9"/></svg><div class="a" style="left:43px;top:1px;width:3.5px;height:19px;background:#808080"></div><svg class="a" style="left:54.3px;top:6.5px" width="7" height="10" viewBox="0 0 7 10"><path d="M1 1 L4.4 4.4 L1 7.8" fill="none" stroke="#dedede" stroke-width="1.1"/></svg><svg class="a" style="left:72px;top:1.5px" width="18" height="18" viewBox="0 0 18 18"><rect width="18" height="18" fill="#fff"/><circle cx="3" cy="9" r="1.4" fill="#111"/><circle cx="15" cy="9" r="1.4" fill="#111"/><rect x="0.5" y="0.5" width="17" height="17" fill="none" stroke="#000" stroke-width="1"/></svg><span id="L6" class="a ln" style="left:95.5px">eyes</span><div class="a" style="left:199px;top:6.5px;width:8px;height:8px;border-radius:4px;border:1px solid #d4d4d4"></div></div><div class="lr a" style="top:250.5px;background:transparent"><svg class="a" style="left:3.5px;top:6px" width="13" height="9" viewBox="0 0 13 9"><path d="M0.3 4.5 C2.5 0.3 10.5 0.3 12.7 4.5 C10.5 8.7 2.5 8.7 0.3 4.5 Z" fill="#c9c9c9"/><circle cx="6.5" cy="4.3" r="2.6" fill="#535353"/><circle cx="6.5" cy="4.3" r="1.3" fill="#c9c9c9"/></svg><div class="a" style="left:43px;top:1px;width:3.5px;height:19px;background:#4fe3f2"></div><svg class="a" style="left:54.3px;top:6.5px" width="7" height="10" viewBox="0 0 7 10"><path d="M1 1 L4.4 4.4 L1 7.8" fill="none" stroke="#dedede" stroke-width="1.1"/></svg><svg class="a" style="left:72px;top:1.5px" width="18" height="18" viewBox="0 0 18 18"><rect width="18" height="18" fill="#fff"/><rect x="1" y="8.3" width="6.5" height="1.4" fill="#111"/><rect x="10.5" y="8.3" width="6.5" height="1.4" fill="#111"/><rect x="0.5" y="0.5" width="17" height="17" fill="none" stroke="#000" stroke-width="1"/></svg><span id="L7" class="a ln" style="left:95.5px">Brow</span><div class="a" style="left:199px;top:6.5px;width:8px;height:8px;border-radius:4px;border:1px solid #d4d4d4"></div></div><div class="lr a" style="top:271.5px;background:transparent"><svg class="a" style="left:3.5px;top:6px" width="13" height="9" viewBox="0 0 13 9"><path d="M0.3 4.5 C2.5 0.3 10.5 0.3 12.7 4.5 C10.5 8.7 2.5 8.7 0.3 4.5 Z" fill="#c9c9c9"/><circle cx="6.5" cy="4.3" r="2.6" fill="#535353"/><circle cx="6.5" cy="4.3" r="1.3" fill="#c9c9c9"/></svg><div class="a" style="left:43px;top:1px;width:3.5px;height:19px;background:#e9504f"></div><svg class="a" style="left:54.3px;top:6.5px" width="7" height="10" viewBox="0 0 7 10"><path d="M1 1 L4.4 4.4 L1 7.8" fill="none" stroke="#dedede" stroke-width="1.1"/></svg><svg class="a" style="left:72px;top:1.5px" width="18" height="18" viewBox="0 0 18 18"><rect width="18" height="18" fill="#fff"/><rect x="1.5" y="2" width="2.5" height="1" fill="#222"/><rect x="13" y="8" width="1.4" height="6" fill="#e9504f"/><rect x="12" y="10" width="3" height="1" fill="#e9504f"/><rect x="0.5" y="0.5" width="17" height="17" fill="none" stroke="#000" stroke-width="1"/></svg><span id="L8" class="a ln" style="left:95.5px">Head</span><div class="a" style="left:199px;top:6.5px;width:8px;height:8px;border-radius:4px;border:1px solid #d4d4d4"></div></div><div class="lr a" style="top:292.5px;background:transparent"><svg class="a" style="left:3.5px;top:6px" width="13" height="9" viewBox="0 0 13 9"><path d="M0.3 4.5 C2.5 0.3 10.5 0.3 12.7 4.5 C10.5 8.7 2.5 8.7 0.3 4.5 Z" fill="#c9c9c9"/><circle cx="6.5" cy="4.3" r="2.6" fill="#535353"/><circle cx="6.5" cy="4.3" r="1.3" fill="#c9c9c9"/></svg><div class="a" style="left:43px;top:1px;width:3.5px;height:19px;background:#e9504f"></div><svg class="a" style="left:54.3px;top:6.5px" width="7" height="10" viewBox="0 0 7 10"><path d="M1 1 L4.4 4.4 L1 7.8" fill="none" stroke="#dedede" stroke-width="1.1"/></svg><svg class="a" style="left:72px;top:1.5px" width="18" height="18" viewBox="0 0 18 18"><rect width="18" height="18" fill="#fff"/><rect x="0" y="0" width="18" height="18" fill="#e4e4e4"/><rect x="0.5" y="0.5" width="17" height="17" fill="none" stroke="#000" stroke-width="1"/></svg><span id="L9" class="a ln" style="left:95.5px">Body</span><div class="a" style="left:199px;top:6.5px;width:8px;height:8px;border-radius:4px;border:1px solid #d4d4d4"></div></div><div class="lr a" style="top:313.5px;background:transparent"><svg class="a" style="left:3.5px;top:6px" width="13" height="9" viewBox="0 0 13 9"><path d="M0.3 4.5 C2.5 0.3 10.5 0.3 12.7 4.5 C10.5 8.7 2.5 8.7 0.3 4.5 Z" fill="#c9c9c9"/><circle cx="6.5" cy="4.3" r="2.6" fill="#535353"/><circle cx="6.5" cy="4.3" r="1.3" fill="#c9c9c9"/></svg><div class="a" style="left:43px;top:1px;width:3.5px;height:19px;background:#50ea72"></div><svg class="a" style="left:54.3px;top:6.5px" width="7" height="10" viewBox="0 0 7 10"><path d="M1 1 L4.4 4.4 L1 7.8" fill="none" stroke="#dedede" stroke-width="1.1"/></svg><svg class="a" style="left:72px;top:1.5px" width="18" height="18" viewBox="0 0 18 18"><rect width="18" height="18" fill="#fff"/><path d="M0 4 L14 16 L0 18 Z" fill="#f3f3f3"/><circle cx="13" cy="12" r="4" fill="#f4c1a2"/><rect x="0.5" y="0.5" width="17" height="17" fill="none" stroke="#000" stroke-width="1"/></svg><span id="L10" class="a ln" style="left:95.5px">Left ruka</span><div class="a" style="left:199px;top:6.5px;width:8px;height:8px;border-radius:4px;border:1px solid #d4d4d4"></div></div><div class="lr a" style="top:334.5px;background:transparent"><svg class="a" style="left:3.5px;top:6px" width="13" height="9" viewBox="0 0 13 9"><path d="M0.3 4.5 C2.5 0.3 10.5 0.3 12.7 4.5 C10.5 8.7 2.5 8.7 0.3 4.5 Z" fill="#c9c9c9"/><circle cx="6.5" cy="4.3" r="2.6" fill="#535353"/><circle cx="6.5" cy="4.3" r="1.3" fill="#c9c9c9"/></svg><div class="a" style="left:43px;top:1px;width:3.5px;height:19px;background:#e253e2"></div><svg class="a" style="left:54.3px;top:6.5px" width="7" height="10" viewBox="0 0 7 10"><path d="M1 1 L4.4 4.4 L1 7.8" fill="none" stroke="#dedede" stroke-width="1.1"/></svg><svg class="a" style="left:72px;top:1.5px" width="18" height="18" viewBox="0 0 18 18"><rect width="18" height="18" fill="#fff"/><path d="M2.5 10 V7.5 A2 2 0 0 1 6.5 7.5 V10 Z" fill="#111"/><path d="M11.5 10 V7.5 A2 2 0 0 1 15.5 7.5 V10 Z" fill="#111"/><rect x="1.5" y="11.5" width="6.5" height="1.600" fill="#222"/><rect x="10.5" y="11.5" width="6.5" height="1.600" fill="#222"/><rect x="0.5" y="0.5" width="17" height="17" fill="none" stroke="#000" stroke-width="1"/></svg><span id="L11" class="a ln" style="left:95.5px">Boots</span><div class="a" style="left:199px;top:6.5px;width:8px;height:8px;border-radius:4px;border:1px solid #d4d4d4"></div></div></div>
<span id="b0" class="a" style="left:1004px;top:735px;font-size:11.5px;line-height:15px;color:#d0d0d0;white-space:nowrap;letter-spacing:-0.3px">10 С...</span>
<svg class="a" style="left:1068px;top:733px" width="150" height="17" viewBox="1068 733 150 17"><g fill="none" stroke="#cfcfcf" stroke-width="1.1">
<path d="M1075 736.5 H1071 V746.5 H1081 V742.5"/><path d="M1076 741.5 L1081.5 736 M1077.5 735.5 H1082 V740"/>
<g stroke="#7a7a7a"><circle cx="1100.5" cy="740" r="3.8"/><path d="M1103.3 743 L1107.5 747" stroke-width="1.6"/></g>
<rect x="1122.5" y="737" width="7" height="7" fill="#9a9a9a"/><rect x="1125.5" y="740" width="7" height="7" stroke="#8a8a8a"/>
<path d="M1146.5 736 V740 H1151 M1149.3 738 L1151.3 740 L1149.3 742"/><rect x="1153" y="738" width="8.5" height="8" /><path d="M1157.2 739.8 V744.2 M1155 742 H1159.4"/>
<rect x="1175.5" y="737" width="9.5" height="9.5"/><path d="M1180.2 739.3 V744.2 M1177.8 741.8 H1182.7"/>
<path d="M1201 738.5 H1210.5 M1204 738.5 V736.5 H1207.5 V738.5 M1202 738.5 V746.5 Q1202 747.5 1203 747.5 H1208.5 Q1209.5 747.5 1209.5 746.5 V738.5 M1204.5 740.5 V745.5 M1207 740.5 V745.5"/>
</g></svg>
<div id="rdock" class="a"></div>
<div class="a" style="left:1241.5px;top:58.5px;width:39px;height:11px;background:#454545"></div>
<svg class="a" style="left:1241px;top:58px" width="39" height="90" viewBox="1241 58 39 90">
<path d="M1268.7 61.6 L1266.9 63.8 L1268.7 66 M1272.2 61.6 L1270.4 63.8 L1272.2 66" fill="none" stroke="#c4c4c4" stroke-width="1"/>
<g fill="#3b3b3b"><rect x="1251.3" y="73" width="1" height="4"/><rect x="1253.35" y="73" width="1" height="4"/><rect x="1255.4" y="73" width="1" height="4"/><rect x="1257.45" y="73" width="1" height="4"/><rect x="1259.5" y="73" width="1" height="4"/><rect x="1261.55" y="73" width="1" height="4"/><rect x="1263.6" y="73" width="1" height="4"/><rect x="1265.65" y="73" width="1" height="4"/><rect x="1267.7" y="73" width="1" height="4"/><rect x="1269.75" y="73" width="1" height="4"/></g>
<g fill="#cfcfcf"><rect x="1254" y="86" width="3" height="3"/><rect x="1260" y="86" width="3" height="3"/><rect x="1266" y="86" width="3" height="3"/><rect x="1254" y="92" width="3" height="3"/><rect x="1266" y="92" width="3" height="3"/><rect x="1254" y="98" width="3" height="3"/><rect x="1260" y="98" width="3" height="3"/><rect x="1266" y="98" width="3" height="3"/><rect x="1260.8" y="92.8" width="1.5" height="1.5"/>
<rect x="1257" y="87" width="3" height="1"/><rect x="1263" y="87" width="3" height="1"/><rect x="1257" y="99" width="3" height="1"/><rect x="1263" y="99" width="3" height="1"/><rect x="1255" y="89" width="1" height="3"/><rect x="1255" y="95" width="1" height="3"/><rect x="1267" y="89" width="1" height="3"/><rect x="1267" y="95" width="1" height="3"/>
<rect x="1254.2" y="112.5" width="1.2" height="18.5"/><rect x="1256.5" y="115" width="7.5" height="5.6"/><rect x="1256.5" y="122.5" width="12.5" height="5.6"/></g>
<rect x="1241.5" y="137.5" width="39" height="1.2" fill="#3c3c3c"/>
</svg>
<div class="a" style="left:346.5px;top:752px;width:586.5px;height:54px;background:#19191b;border:1px solid #353535;border-radius:6px"></div>
<svg class="a" style="left:346px;top:752px" width="588" height="48" viewBox="346 752 588 48">
<defs>
<linearGradient id="fb" x1="0" y1="0" x2="0" y2="1"><stop offset="0" stop-color="#35b8f8"/><stop offset="1" stop-color="#1479e6"/></linearGradient>
<linearGradient id="fw" x1="0" y1="0" x2="0" y2="1"><stop offset="0" stop-color="#f4f7fa"/><stop offset="1" stop-color="#d9e3ee"/></linearGradient>
<linearGradient id="it" x1="0" y1="0" x2="1" y2="1"><stop offset="0" stop-color="#f8508a"/><stop offset="0.5" stop-color="#c86ae8"/><stop offset="1" stop-color="#2fb2f5"/></linearGradient>
<linearGradient id="nt" x1="0" y1="0" x2="0" y2="1"><stop offset="0" stop-color="#f54a6e"/><stop offset="0.550" stop-color="#d860c8"/><stop offset="1" stop-color="#3e9af5"/></linearGradient>
<linearGradient id="tg" x1="0" y1="0" x2="0" y2="1"><stop offset="0" stop-color="#36aee2"/><stop offset="1" stop-color="#1e96c8"/></linearGradient>
<linearGradient id="du" x1="0" y1="0" x2="0" y2="1"><stop offset="0" stop-color="#d9dbde"/><stop offset="1" stop-color="#8f9296"/></linearGradient>
<linearGradient id="tr" x1="0" y1="0" x2="1" y2="0"><stop offset="0" stop-color="#5c5e61"/><stop offset="0.5" stop-color="#77797c"/><stop offset="1" stop-color="#4b4c4f"/></linearGradient>
<linearGradient id="xc" x1="0" y1="0" x2="0" y2="1"><stop offset="0" stop-color="#4db1f5"/><stop offset="1" stop-color="#1c7fe0"/></linearGradient>
</defs>
<!-- finder -->
<rect x="353" y="760" width="30.5" height="28.8" rx="1.5" fill="url(#fw)"/>
<path d="M354.5 760 H370.5 C368 766 366.5 772 366.5 777 H371 C371 781 371.3 785 372 788.8 H354.5 Q353 788.8 353 787.3 V761.5 Q353 760 354.5 760 Z" fill="url(#fb)"/>
<path d="M359 780 C364 785 372 785 378 779.5" fill="none" stroke="#1d2a3a" stroke-width="1"/>
<rect x="361" y="767.5" width="1.2" height="3.6" rx="0.6" fill="#1d2a3a"/><rect x="375" y="767.5" width="1.2" height="3.6" rx="0.6" fill="#1d2a3a"/>
<!-- opera -->
<circle cx="407.5" cy="774.4" r="15.5" fill="none" stroke="#e8264f" stroke-width="2.2"/>
<ellipse cx="408.6" cy="774.4" rx="8.8" ry="14" fill="none" stroke="#e8264f" stroke-width="1.9"/>
<!-- vscode -->
<path d="M453 758.5 L462.5 763 V786 L453 790.5 L430.5 770.5 L433.5 767.5 L453 781.5 V767.5 L433.5 781.5 L430.5 778.5 Z" fill="#1f9cf0"/>
<path d="M453 758.5 L462.5 763 V786 L453 790.5 Z" fill="#2aaaf5"/>
<path d="M453 767.5 V781.5 L443.5 774.5 Z" fill="#19191b"/>
<!-- visual studio -->
<path d="M493 757.5 L501.5 762 V786 L493 791 L478 788 L470.5 781 V768 L478 761 Z" fill="#fbf7ff" stroke="#9a58d0" stroke-width="1.4" stroke-linejoin="round"/>
<path d="M492.5 763.5 L497.5 766 V782.5 L492.5 785 L475.5 770.5 L473.5 771.5 V777.5 L475.5 778.5 Z M492.5 770 V778.5 L486.8 774.3 Z" fill="#7b4bc0" fill-rule="evenodd"/>
<path d="M492.5 763.5 L497.5 766 V782.5 L492.5 785 Z" fill="#a77de0"/>
<!-- xcode -->
<path d="M507 767 L536 762.5 L540.5 784.5 L511.5 789.5 Z" fill="url(#xc)"/>
<path d="M515 785 L523.5 766 L532 783 M517 780 H531 M513 776 L535 772" fill="none" stroke="#9fd4fa" stroke-width="0.8"/>
<path d="M535.5 763 L527.5 788.5" stroke="#2a2a2c" stroke-width="3.2" stroke-linecap="round"/>
<path d="M526.8 759.8 C531 757.3 538 758 541.8 761.8 L540.5 764.6 C538.5 763 536 762.5 533.5 764.5 L530.5 763.5 C530 762 528.5 761.5 527.3 762.3 Z" fill="#d4d6d9"/>
<!-- itunes -->
<circle cx="563.8" cy="774.4" r="15.5" fill="#f4f2f6" stroke="url(#it)" stroke-width="1.8"/>
<path d="M558.5 767 L570.5 764.5 V778.5 A3 2.5 0 1 1 568.8 776.3 V768.5 L560.2 770.3 V780.5 A3 2.5 0 1 1 558.5 778.3 Z" fill="url(#nt)"/>
<!-- sep -->
<rect x="591.8" y="763.8" width="1" height="23.7" fill="#3e3e40"/>
<!-- telegram -->
<circle cx="620.6" cy="774.4" r="16.6" fill="url(#tg)"/>
<path d="M610 774.5 L628.5 767.3 L625.5 782.5 L619.5 778 L616.5 781 L616 776.5 L624.5 770.5 L614.5 776 Z" fill="#fff"/>
<!-- terminal -->
<rect x="643.7" y="760.5" width="31.5" height="27" rx="2.5" fill="#222224" stroke="#3f3f41" stroke-width="1.5"/>
<path d="M648 764.5 L652 766.5 L648 768.5" fill="none" stroke="#fff" stroke-width="1.2"/><rect x="652.5" y="769" width="4" height="1.2" fill="#fff"/>
<!-- disk utility -->
<path d="M684.5 765.4 H704 Q705 765.4 705.2 766.4 L707 788.5 Q707 790.7 705 790.7 H683.5 Q681.5 790.7 681.5 788.5 L683.4 766.4 Q683.5 765.4 684.5 765.4 Z" fill="url(#du)"/>
<rect x="682" y="786" width="24.5" height="4.2" fill="#85888c"/>
<rect x="685" y="787.3" width="5" height="1.8" fill="#3a3c40"/><rect x="693" y="787.3" width="7" height="1.8" fill="#2a2c30"/>
<ellipse cx="693.5" cy="775.5" rx="5.5" ry="4.6" fill="#eef0f2" stroke="#9a9da2" stroke-width="0.6"/><circle cx="693.5" cy="774.5" r="1.6" fill="#7c7f84"/>
<path d="M694.5 772 C693 767 691 764 689.5 762 C688 760 691 758 693 759.5 C696 761 697.5 763 698.5 765.5" fill="none" stroke="#242426" stroke-width="1.3"/>
<path d="M698.5 765.5 C697 759 701 755.5 707 755.8 C714 756 718 761 716.5 768 C715 775 710 780.5 706 781 C704 781 702.5 778.5 702 776" fill="none" stroke="#6c6e72" stroke-width="1.3"/>
<path d="M712 757.5 C717 760 717.5 766 715 772" fill="none" stroke="#b4b6ba" stroke-width="0.8"/>
<!-- creative cloud -->
<rect x="720.3" y="756.2" width="34.4" height="33.8" rx="5.5" fill="#e8231c"/>
<g fill="none" stroke="#fff" stroke-width="2.3" stroke-linecap="round"><path d="M736.5 780.3 A6.4 6.4 0 1 1 736.3 770.3 L741.3 775.3"/><path d="M734.8 770.8 A8.2 8.2 0 1 1 740.3 781.3 L733.3 774.3"/></g>
<g fill="none" stroke="#e8231c" stroke-width="0.6" stroke-linecap="round"><path d="M736.5 780.3 A6.4 6.4 0 1 1 736.3 770.3 L741.3 775.3"/><path d="M734.8 770.8 A8.2 8.2 0 1 1 740.3 781.3 L733.3 774.3"/></g>
<!-- ai -->
<rect x="759.5" y="757.7" width="33.5" height="31.8" fill="#2e1706" stroke="#f7962d" stroke-width="1.5"/>
<text x="767.3" y="780.2" font-family="Liberation Sans, sans-serif" font-weight="bold" font-size="22.5" fill="#f7962d" textLength="18.8" lengthAdjust="spacingAndGlyphs">Ai</text>
<!-- sep2 -->
<rect x="804.8" y="758" width="1" height="35" fill="#3e3e40"/>
<!-- docs -->
<rect x="824.5" y="756.5" width="18.5" height="12" fill="#fff" stroke="#f0a24a" stroke-width="1"/><rect x="827" y="760" width="13.5" height="3" fill="#1fc26a"/>
<rect x="818" y="764" width="28.2" height="24" fill="#7a5c9c"/><rect x="818" y="764" width="4" height="24" fill="#1c2216"/><rect x="822" y="764" width="8" height="24" fill="#f6e7c2"/>
<path d="M831 766 C835 765 837 768 836 771 L838.5 774 V787 H834 V776 L832 771 Z" fill="#2a48b8"/><circle cx="832.8" cy="768.5" r="2.3" fill="#e9b99a"/><path d="M830.5 766.5 C832 764.5 836 764.5 836.5 768 L834 767 Z" fill="#4a2e3e"/>
<!-- window stack -->
<rect x="855.3" y="762" width="34.7" height="25" fill="#4b4b4d"/>
<g fill="#8a8a8c"><rect x="857" y="763.5" width="7" height="1.5"/><rect x="866" y="763.5" width="3" height="1.5"/><rect x="883" y="763.5" width="5" height="1.5"/><rect x="857" y="768" width="6" height="1"/><rect x="857" y="772" width="5" height="1"/><rect x="857" y="776" width="6" height="1"/><rect x="857" y="780" width="5" height="1"/><rect x="857" y="784" width="4" height="1"/><rect x="868" y="769" width="19" height="1"/><rect x="868" y="773" width="12" height="1"/><rect x="875" y="775.5" width="10" height="1"/><rect x="868" y="779" width="14" height="1"/><rect x="868" y="783" width="18" height="1"/></g>
<rect x="865" y="767" width="0.7" height="19" fill="#6a6a6c"/>
<!-- trash -->
<path d="M899.5 761 H924.5 L921.8 787.5 Q921.5 790.5 918.5 790.5 H905.5 Q902.5 790.5 902.2 787.5 Z" fill="url(#tr)" opacity="0.9"/>
<ellipse cx="912" cy="761.5" rx="12.7" ry="3" fill="#a6a8ab"/>
<path d="M902 761 L905 757.5 L909 760 L912 756.5 L916 759.5 L919.5 757 L922.5 761 C918 763.5 906 763.5 902 761 Z" fill="#f0f0f2"/>
<path d="M906 759.5 L909 760.5 L907.5 762 Z" fill="#e0344a"/><path d="M911 759 L914 758 L913.5 761.5 Z" fill="#28b070"/><path d="M917 759 L920 760 L918 762 Z" fill="#d03a50"/>
<!-- dots -->
<g fill="#9c9c9e"><circle cx="368" cy="796.3" r="1.8"/><circle cx="407" cy="796.3" r="1.8"/><circle cx="620.3" cy="796.3" r="1.8"/><circle cx="658.8" cy="796.3" r="1.8"/><circle cx="697.8" cy="796.3" r="1.8"/><circle cx="736.9" cy="796.3" r="1.8"/><circle cx="776" cy="796.3" r="1.8"/></g>
</svg>
</body></html>
